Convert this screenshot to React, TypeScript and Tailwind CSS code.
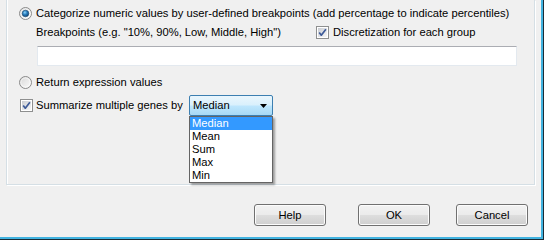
import React from "react";

function Radio({ checked }: { checked?: boolean }) {
  return (
    <svg width="13" height="13" viewBox="0 0 13 13" className="shrink-0">
      <defs>
        <linearGradient id="rbg" x1="0" y1="0" x2="1" y2="1">
          <stop offset="0" stopColor="#d6d6d6" />
          <stop offset="1" stopColor="#fdfdfd" />
        </linearGradient>
        <radialGradient id="rdot" cx="0.4" cy="0.35" r="0.7">
          <stop offset="0" stopColor="#8fd3f8" />
          <stop offset="0.45" stopColor="#2a7fbf" />
          <stop offset="1" stopColor="#0f3f6e" />
        </radialGradient>
      </defs>
      <circle cx="6.5" cy="6.5" r="6" fill="url(#rbg)" stroke="#8a8a8a" strokeWidth="1" />
      <circle cx="6.5" cy="6.5" r="4.6" fill="none" stroke="#ffffff" strokeWidth="0.8" opacity="0.7" />
      {checked && <circle cx="6.5" cy="6.5" r="3.3" fill="url(#rdot)" stroke="#1c4a72" strokeWidth="0.6" />}
    </svg>
  );
}

function Check() {
  return (
    <svg width="13" height="13" viewBox="0 0 13 13" className="shrink-0">
      <defs>
        <linearGradient id="cbg" x1="0" y1="0" x2="1" y2="1">
          <stop offset="0" stopColor="#c9ccd2" />
          <stop offset="1" stopColor="#f7f7f7" />
        </linearGradient>
      </defs>
      <rect x="0.5" y="0.5" width="12" height="12" fill="#ffffff" stroke="#8e8f8f" />
      <rect x="2" y="2" width="9" height="9" fill="url(#cbg)" />
      <path d="M3.2 6.4 L5.3 9.2 L9.9 3.2" fill="none" stroke="#3d5a98" strokeWidth="1.7" strokeLinejoin="round" />
    </svg>
  );
}

function Button({ label }: { label: string }) {
  return (
    <div className="w-[72px] h-[22px] rounded-[3px] border border-[#707070] bg-[linear-gradient(#f2f2f2_0%,#ebebeb_48%,#dddddd_52%,#cfcfcf_100%)] shadow-[inset_0_0_0_1px_#fcfcfc] flex items-center justify-center text-black">
      {label}
    </div>
  );
}

export default function App() {
  const items = ["Median", "Mean", "Sum", "Max", "Min"];
  return (
    <div className="w-[544px] h-[240px] bg-[#1b2b35] overflow-hidden">
      <div className="w-[543px] h-[239px] bg-[#41b3e0]">
        <div
          className="w-[541px] h-[237px] bg-[#f0f0f0] text-black text-[11.2px] leading-[13px]"
          style={{ fontFamily: '"Liberation Sans", Arial, sans-serif' }}
        >
          <div className="ml-[6px] w-[529px] h-[185px] border-x border-b border-[#d5dfe5] shadow-[1px_1px_0_#ffffff,inset_1px_0_0_#ffffff] pl-[12px]">
            <div className="pt-[7px] h-[20px] flex items-center gap-[4px]">
              <Radio checked />
              <span>Categorize numeric values by user-defined breakpoints (add percentage to indicate percentiles)</span>
            </div>
            <div className="mt-[6px] h-[13px] flex items-center">
              <span className="ml-[17px] w-[280px]">Breakpoints (e.g. "10%, 90%, Low, Middle, High")</span>
              <Check />
              <span className="ml-[4px]">Discretization for each group</span>
            </div>
            <div className="mt-[7px] ml-[18px] w-[480px] h-[20px] bg-white border border-[#e3e9ef] border-t-[#abadb3]" />
            <div className="mt-[10px] h-[13px] flex items-center gap-[4px]">
              <Radio />
              <span>Return expression values</span>
            </div>
            <div className="mt-[6px] h-[21px] flex items-center">
              <div className="ml-[1px]">
                <Check />
              </div>
              <span className="ml-[3px] w-[153px]">Summarize multiple genes by</span>
              <div className="relative">
                <div className="w-[84px] h-[21px] rounded-[2px] border border-[#3c7fb1] bg-[linear-gradient(#eaf6fd_0%,#d9f0fc_48%,#bee6fd_52%,#a7d9f5_100%)] flex items-center pl-[3px]">
                  <span className="flex-1">Median</span>
                  <svg width="7" height="4" viewBox="0 0 7 4" className="mr-[5px]">
                    <path d="M0 0 H7 L3.5 4 Z" fill="#000000" />
                  </svg>
                </div>
                <div className="absolute left-0 top-[21px] w-[84px] h-[67px] bg-white border border-[#646464] shadow-[2px_2px_2px_rgba(0,0,0,0.35)] flex flex-col">
                  {items.map((it, i) => (
                    <div
                      key={it}
                      className={
                        i === 0
                          ? "h-[13px] bg-[#3399ff] text-white pl-[2px] leading-[13px]"
                          : "h-[13px] pl-[2px] leading-[13px]"
                      }
                    >
                      {it}
                    </div>
                  ))}
                </div>
              </div>
            </div>
          </div>
          <div className="mt-[19px] flex">
            <div className="ml-[254px]">
              <Button label="Help" />
            </div>
            <div className="ml-[32px]">
              <Button label="OK" />
            </div>
            <div className="ml-[26px]">
              <Button label="Cancel" />
            </div>
          </div>
        </div>
      </div>
    </div>
  );
}
